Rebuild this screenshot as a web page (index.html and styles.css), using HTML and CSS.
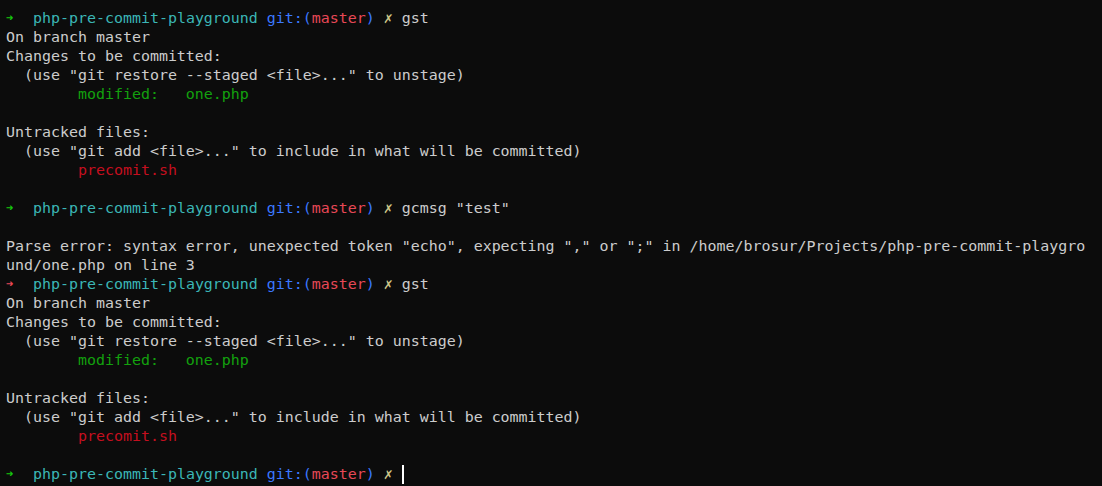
FILE: index.html
```html
<!DOCTYPE html>
<html>
<head>
<meta charset="utf-8">
<link rel="stylesheet" href="styles.css">
</head>
<body>
<div class="term">
<div class="ln"><span class="arr-g">➜</span>  <span class="dir">php-pre-commit-playground</span> <span class="git">git:(</span><span class="br">master</span><span class="git">)</span> <span class="x">✗</span> gst</div>
<div class="ln">On branch master</div>
<div class="ln">Changes to be committed:</div>
<div class="ln">  (use "git restore --staged &lt;file&gt;..." to unstage)</div>
<div class="ln">        <span class="mod">modified:   one.php</span></div>
<div class="ln"> </div>
<div class="ln">Untracked files:</div>
<div class="ln">  (use "git add &lt;file&gt;..." to include in what will be committed)</div>
<div class="ln">        <span class="un">precomit.sh</span></div>
<div class="ln"> </div>
<div class="ln"><span class="arr-g">➜</span>  <span class="dir">php-pre-commit-playground</span> <span class="git">git:(</span><span class="br">master</span><span class="git">)</span> <span class="x">✗</span> gcmsg "test"</div>
<div class="ln"> </div>
<div class="ln">Parse error: syntax error, unexpected token "echo", expecting "," or ";" in /home/brosur/Projects/php-pre-commit-playgro</div>
<div class="ln">und/one.php on line 3</div>
<div class="ln"><span class="arr-r">➜</span>  <span class="dir">php-pre-commit-playground</span> <span class="git">git:(</span><span class="br">master</span><span class="git">)</span> <span class="x">✗</span> gst</div>
<div class="ln">On branch master</div>
<div class="ln">Changes to be committed:</div>
<div class="ln">  (use "git restore --staged &lt;file&gt;..." to unstage)</div>
<div class="ln">        <span class="mod">modified:   one.php</span></div>
<div class="ln"> </div>
<div class="ln">Untracked files:</div>
<div class="ln">  (use "git add &lt;file&gt;..." to include in what will be committed)</div>
<div class="ln">        <span class="un">precomit.sh</span></div>
<div class="ln"> </div>
<div class="ln"><span class="arr-g">➜</span>  <span class="dir">php-pre-commit-playground</span> <span class="git">git:(</span><span class="br">master</span><span class="git">)</span> <span class="x">✗</span> <span class="cursor"></span></div>
</div>
</body>
</html>
```
FILE: styles.css
```css
html, body {
  margin: 0;
  padding: 0;
  background: #0c0c0c;
  height: 100%;
  overflow: hidden;
}
.term {
  padding: 9px 0 0 6px;
  font-family: "DejaVu Sans Mono", "Liberation Mono", monospace;
  font-size: 14.95px;
  line-height: 19px;
  color: #cccccc;
}
.ln {
  height: 19px;
  white-space: pre;
}
.arr-g, .arr-r {
  display: inline-block;
  width: 9px;
  font-size: 12px;
  vertical-align: top;
}
.arr-g { color: #16c60c; }
.arr-r { color: #e74856; }
.dir { color: #3bb6b6; }
.git { color: #3b78ff; }
.br { color: #e74856; }
.x { color: #cfc78a; font-weight: 300; }
.mod { color: #13a10e; }
.un { color: #c50f1f; }
.cursor {
  display: inline-block;
  width: 2px;
  height: 19px;
  background: #ffffff;
  vertical-align: top;
}
```
